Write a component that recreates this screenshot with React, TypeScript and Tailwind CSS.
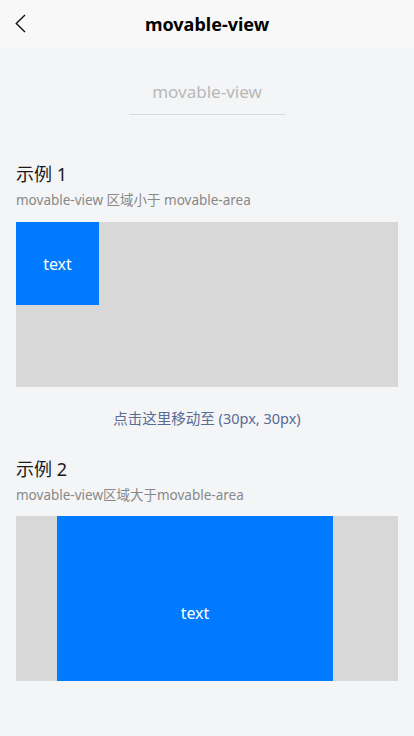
const font = { fontFamily: '"Noto Sans", "Noto Sans CJK SC", sans-serif' };

const Section = ({ title, desc }: { title: string; desc: string }) => (
  <div className="px-4">
    <div className="text-[18px] leading-[24px] text-[#1a1a1a]">{title}</div>
    <div className="mt-[4px] text-[13.5px] leading-[20px] text-[#888888]">{desc}</div>
  </div>
);

export default function App() {
  return (
    <div className="w-[414px] min-h-[736px] bg-[#f4f5f6]" style={font}>
      {/* nav bar */}
      <header className="relative h-12 bg-[#f8f8f8] flex items-center justify-center">
        <svg className="absolute left-[12px] top-[12px]" width="20" height="24" viewBox="0 0 20 24">
          <path d="M13 3 L4.3 11.5 L13 20" fill="none" stroke="#111" strokeWidth="1.4" />
        </svg>
        <h1 className="text-[18px] font-bold text-black leading-none">movable-view</h1>
      </header>

      {/* page title */}
      <div className="flex justify-center pt-[31px]">
        <div className="w-[156px] border-b border-[#d9d9d9] pb-[9px] text-center text-[17px] leading-[26px] text-[#b8b8b8]">
          movable-view
        </div>
      </div>

      <div className="pt-[47px]">
        <Section title="示例 1" desc="movable-view 区域小于 movable-area" />
        <div className="mx-4 mt-[12px] h-[165px] bg-[#d8d8d8]">
          <div className="w-[83px] h-[83px] bg-[#007aff] flex items-center justify-center text-white text-[16px]">
            text
          </div>
        </div>
        <div className="mt-[20px] text-center text-[14.5px] leading-[22px] text-[#576b95]">
          点击这里移动至 (30px, 30px)
        </div>
      </div>

      <div className="pt-[28px]">
        <Section title="示例 2" desc="movable-view区域大于movable-area" />
        <div className="mx-4 mt-[11px] h-[165px] bg-[#d8d8d8] pl-[41px] overflow-hidden">
          <div className="w-[276px] h-[194px] bg-[#007aff] flex items-center justify-center text-white text-[16px]">
            text
          </div>
        </div>
      </div>
    </div>
  );
}
